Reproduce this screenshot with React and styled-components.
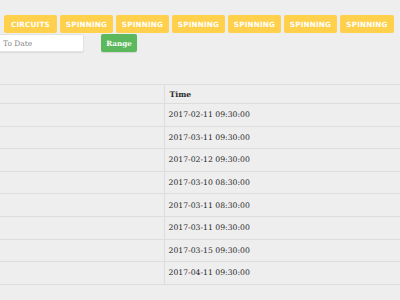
import React from "react";
import styled, { createGlobalStyle } from "styled-components";

const Global = createGlobalStyle`
  html, body { margin: 0; padding: 0; background: #eeeeee; overflow: hidden; }
  body { font-family: "DejaVu Serif", serif; color: #2a2a2a; }
`;

const Page = styled.div`
  width: 400px;
  height: 300px;
  overflow: hidden;
  display: flex;
  flex-direction: column;
`;

const Toolbar = styled.div`
  display: flex;
  gap: 3px;
  padding: 15px 0 0 4px;
  white-space: nowrap;
`;

const TagButton = styled.button`
  flex: none;
  width: ${(p) => p.$w}px;
  height: 18px;
  border: none;
  border-radius: 2px;
  background: #ffd04b;
  color: #fff;
  font-family: "DejaVu Sans", sans-serif;
  font-weight: 700;
  font-size: 7.2px;
  letter-spacing: 0.2px;
  text-transform: uppercase;
  padding: 0;
  display: flex;
  align-items: center;
  justify-content: center;
`;

const FilterRow = styled.div`
  display: flex;
  align-items: center;
  gap: 17px;
  margin: 1px 0 0 -10px;
`;

const DateInput = styled.input`
  box-sizing: border-box;
  width: 94px;
  height: 18px;
  border: 1px solid #e2e2e2;
  border-radius: 2px;
  background: #fff;
  box-shadow: 0 1px 1px rgba(0, 0, 0, 0.08);
  padding: 0 0 0 12px;
  font-family: "DejaVu Serif", serif;
  font-size: 7.5px;
  color: #555;
  &::placeholder { color: #888; }
`;

const RangeButton = styled.button`
  width: 36px;
  height: 18px;
  border: none;
  border-radius: 2px;
  background: #5cb85c;
  color: #fff;
  font-family: "DejaVu Serif", serif;
  font-weight: 700;
  font-size: 7.2px;
  padding: 0;
  box-shadow: 0 1px 1px rgba(0, 0, 0, 0.1);
`;

const Table = styled.table`
  margin-top: 32px;
  width: 420px;
  border-collapse: collapse;
  font-size: 7.7px;
`;

const Th = styled.th`
  box-sizing: border-box;
  height: 19px;
  padding: 0 0 0 5px;
  text-align: left;
  font-weight: 700;
  border-top: 1px solid #dddddd;
  border-bottom: 1px solid #dddddd;
  border-left: ${(p) => (p.$divider ? "1px solid #dddddd" : "none")};
  width: ${(p) => (p.$w ? p.$w + "px" : "auto")};
`;

const Td = styled.td`
  height: 21.6px;
  padding: 0 0 0 4px;
  border-bottom: 1px solid #dddddd;
  border-left: ${(p) => (p.$divider ? "1px solid #dddddd" : "none")};
  white-space: nowrap;
`;

const tags = [
  { label: "Circuits", w: 53 },
  { label: "Spinning", w: 53 },
  { label: "Spinning", w: 53 },
  { label: "Spinning", w: 53 },
  { label: "Spinning", w: 53 },
  { label: "Spinning", w: 53 },
  { label: "Spinning", w: 54 },
];

const times = [
  "2017-02-11 09:30:00",
  "2017-03-11 09:30:00",
  "2017-02-12 09:30:00",
  "2017-03-10 08:30:00",
  "2017-03-11 08:30:00",
  "2017-03-11 09:30:00",
  "2017-03-15 09:30:00",
  "2017-04-11 09:30:00",
];

export default function App() {
  return (
    <Page>
      <Global />
      <Toolbar>
        {tags.map((t, i) => (
          <TagButton key={i} $w={t.w}>
            {t.label}
          </TagButton>
        ))}
      </Toolbar>
      <FilterRow>
        <DateInput placeholder="To Date" />
        <RangeButton>Range</RangeButton>
      </FilterRow>
      <Table>
        <thead>
          <tr>
            <Th $w={164}></Th>
            <Th $divider>Time</Th>
          </tr>
        </thead>
        <tbody>
          {times.map((t, i) => (
            <tr key={i}>
              <Td></Td>
              <Td $divider>{t}</Td>
            </tr>
          ))}
        </tbody>
      </Table>
    </Page>
  );
}
